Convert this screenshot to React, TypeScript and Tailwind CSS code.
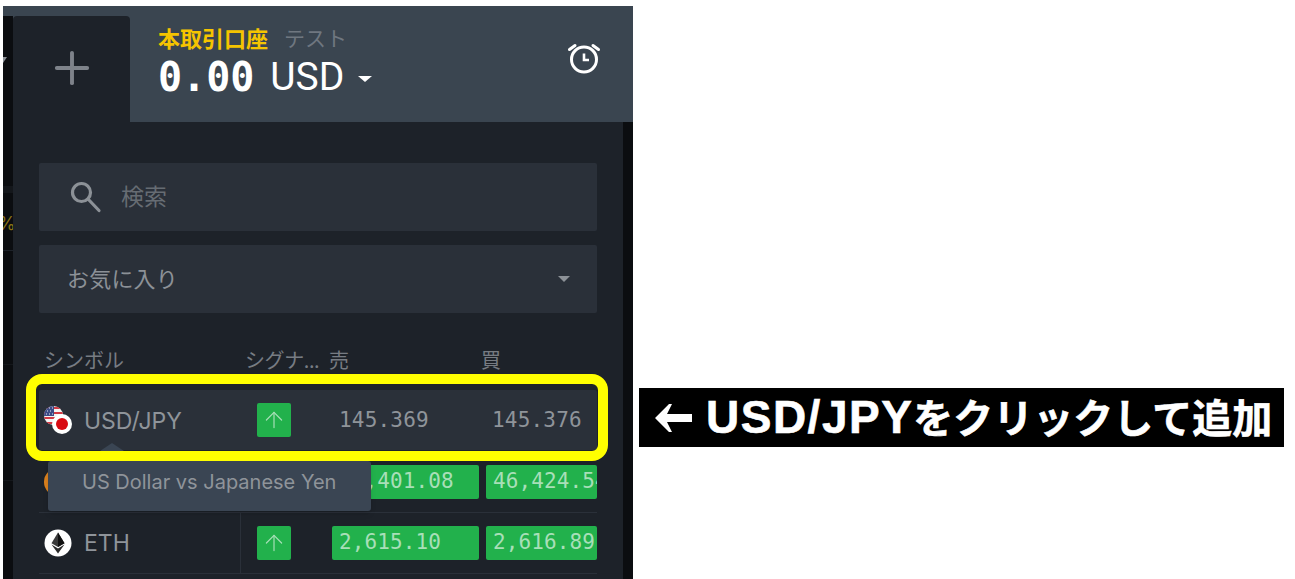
import { Plus, ArrowUp } from "lucide-react";

const jp = "font-['Noto_Sans_CJK_JP','Noto_Sans',sans-serif]";
const ui = "font-['Inter','Noto_Sans_CJK_JP',sans-serif]";
const mono = "font-['DejaVu_Sans_Mono',monospace]";

function AlarmIcon() {
  return (
    <svg width="34" height="36" viewBox="0 0 34 36" fill="none" stroke="white" strokeLinecap="round">
      <circle cx="17" cy="19.5" r="12.5" strokeWidth="3" />
      <path d="M17 13.5v6.5h5" strokeWidth="2.6" strokeLinecap="butt" />
      <path d="M2.5 9.5 8 5.5M31.5 9.5 26 5.5" strokeWidth="3" />
    </svg>
  );
}

function SearchIcon() {
  return (
    <svg width="32" height="32" viewBox="0 0 32 32" fill="none" stroke="#8c9197" strokeWidth="3.2" strokeLinecap="round" className="shrink-0">
      <circle cx="11.5" cy="11.5" r="9" />
      <path d="M18 18 29 29.5" />
    </svg>
  );
}

function BannerArrow() {
  return (
    <svg width="37" height="28" viewBox="0 0 37 28" fill="white" className="shrink-0">
      <path d="M0 14 14 0h3l-5 10h25v8H12l5 10h-3z" />
    </svg>
  );
}

function UsJpFlag() {
  return (
    <div className="relative h-[28px] w-[28px] shrink-0">
      <svg width="19" height="19" viewBox="0 0 19 19" className="absolute left-0 top-0">
        <defs>
          <clipPath id="us-clip">
            <circle cx="9.5" cy="9.5" r="9.5" />
          </clipPath>
        </defs>
        <g clipPath="url(#us-clip)">
          <rect width="19" height="19" fill="#f4f4f4" />
          <path d="M0 2h19M0 7h19M0 12h19M0 17h19" stroke="#d23a45" strokeWidth="2" />
          <rect width="10" height="10" fill="#3d4c86" />
          <path d="M2 2h1M5 2h1M8 2h1M3 5h1M6 5h1M2 8h1M5 8h1M8 8h1" stroke="#e8e8f0" strokeWidth="1" />
        </g>
      </svg>
      <div className="absolute left-[8px] top-[8px] flex h-[20px] w-[20px] items-center justify-center rounded-full bg-white">
        <div className="h-[12px] w-[12px] rounded-full bg-[#d80a12]" />
      </div>
    </div>
  );
}

function EthIcon() {
  return (
    <svg width="28" height="28" viewBox="0 0 28 28" className="shrink-0">
      <circle cx="14" cy="14" r="13.5" fill="white" />
      <path d="M14 3.5 7.5 14.2 14 18l6.5-3.8z" fill="#3a3a3a" />
      <path d="M14 3.5v14.5l6.5-3.8z" fill="#111" />
      <path d="M7.5 15.6 14 24.5l6.5-8.9L14 19.4z" fill="#2a2a2a" />
    </svg>
  );
}

function SignalButton() {
  return (
    <div className="flex h-[34px] w-[34px] shrink-0 items-center justify-center rounded-[2px] bg-[#22b14c]">
      <ArrowUp size={26} strokeWidth={1.1} className="text-[#a8dfb8]" />
    </div>
  );
}

function PriceCell({ value, className }: { value: string; className: string }) {
  return (
    <div
      className={`flex h-[34px] items-center overflow-hidden whitespace-nowrap rounded-[2px] bg-[#22b14c] pl-[7px] text-[21px] tracking-[0.1px] text-[#a8dfb8] ${mono} ${className}`}
    >
      {value}
    </div>
  );
}

export default function App() {
  return (
    <div className="flex h-[579px] w-[1295px] overflow-hidden bg-white pl-[3px] pt-[6px]">
      <div className="flex h-[573px] w-[630px] shrink-0 flex-col">
        {/* top bar */}
        <div className="flex h-[116px] shrink-0 bg-[#3a4550]">
          <div className="mt-[10px] w-[10px] overflow-hidden bg-[#0b0d10] pt-[41px]">
            <div className="h-0 w-0 -translate-x-[4px] border-x-[4px] border-t-[6px] border-x-transparent border-t-[#8c9197]" />
          </div>
          <div className="mt-[10px] flex h-[106px] w-[117px] items-center justify-center rounded-t-[4px] bg-[#1d2229] pb-[2px]">
            <Plus size={52} strokeWidth={1.8} className="text-[#7e838a]" />
          </div>
          <div className="flex flex-1 flex-col pl-[28px] pt-[16px]">
            <div className={`flex items-center leading-[30px] ${jp}`}>
              <span className="text-[22px] font-bold text-[#f5c400]">本取引口座</span>
              <span className="ml-[16px] text-[21px] text-[#6f7780]">テスト</span>
            </div>
            <div className="mt-[3px] flex items-center text-white">
              <span className={`text-[40px] font-bold leading-[44px] ${mono}`}>0.00</span>
              <span className="ml-[16px] font-['Roboto',sans-serif] text-[39px] leading-[44px]">USD</span>
              <span className="ml-[14px] mt-[4px] h-0 w-0 border-x-[7px] border-t-[6px] border-x-transparent border-t-white" />
            </div>
          </div>
          <div className="flex items-center pb-[12px] pr-[32px]">
            <AlarmIcon />
          </div>
        </div>

        {/* watchlist */}
        <div className="flex flex-1 bg-[#0b0d10]">
          <div className="flex w-[10px] shrink-0 flex-col overflow-hidden">
            <div className="mt-[64px] h-[7px] bg-[#14171b]" />
            <div className={`mt-[19px] -ml-[5px] whitespace-nowrap text-[18px] leading-[24px] text-[#8a7214] ${ui}`}>%</div>
            <div className="mt-[14px] h-px bg-[#1d2229]" />
            <div className="mt-[113px] h-px bg-[#14171b]" />
            <div className="mt-[115px] h-px bg-[#14171b]" />
          </div>
          <div className="relative flex-1 overflow-hidden bg-[#1d2229] px-[26px] pt-[41px]">
            <div className="flex h-[68px] w-[558px] items-center rounded-[2px] bg-[#2a3039] pl-[31px]">
              <SearchIcon />
              <span className={`ml-[19px] -translate-y-[2px] text-[23px] text-[#666c73] ${jp}`}>検索</span>
            </div>
            <div className="mt-[14px] flex h-[68px] w-[558px] items-center justify-between rounded-[2px] bg-[#2a3039] pl-[28px] pr-[27px]">
              <span className={`-translate-y-[2px] text-[22px] tracking-[0.2px] text-[#8c9197] ${jp}`}>お気に入り</span>
              <span className="h-0 w-0 border-x-[6px] border-t-[6px] border-x-transparent border-t-[#8c9197]" />
            </div>

            <div className={`mt-[32px] flex h-[45px] w-[558px] items-start text-[20px] leading-[30px] text-[#777c83] ${jp}`}>
              <span className="ml-[5px] w-[201px]">シンボル</span>
              <span className="w-[84px] whitespace-nowrap tracking-[-0.4px]">シグナ...</span>
              <span className="w-[152px]">売</span>
              <span>買</span>
            </div>

            <div className="flex h-[60px] w-[558px] items-center rounded-[2px] bg-[#2a3039] pl-[5px]">
              <UsJpFlag />
              <span className={`ml-[12px] w-[173px] translate-y-[1px] text-[23px] text-[#8f949a] ${ui}`}>USD/JPY</span>
              <SignalButton />
              <span className={`ml-[48px] w-[153px] translate-y-[1px] text-[21px] tracking-[0.2px] text-[#8f949a] ${mono}`}>145.369</span>
              <span className={`translate-y-[1px] text-[21px] tracking-[0.2px] text-[#8f949a] ${mono}`}>145.376</span>
            </div>

            <div className="flex h-[63px] w-[558px] items-center border-b border-[#2a3039] pl-[5px] pt-[1px]">
              <div className="h-[28px] w-[28px] shrink-0 rounded-full bg-[#d9801e]" />
              <div className="ml-[185px]">
                <SignalButton />
              </div>
              <PriceCell value="46,401.08" className="ml-[41px] w-[147px]" />
              <PriceCell value="46,424.54" className="ml-[7px] flex-1" />
            </div>

            <div className="flex h-[61px] w-[558px] items-center border-b border-[#2a3039] pl-[5px]">
              <EthIcon />
              <span className={`ml-[12px] w-[157px] text-[23px] text-[#8f949a] ${ui}`}>ETH</span>
              <div className="-ml-px flex items-center self-stretch border-l border-[#2a3039] pl-[16px]">
                <SignalButton />
              </div>
              <PriceCell value="2,615.10" className="ml-[41px] w-[147px]" />
              <PriceCell value="2,616.89" className="ml-[7px] flex-1" />
            </div>

            {/* tooltip over the BTC row */}
            <div className="absolute left-[35px] top-[339px] flex h-[50px] w-[323px] items-start rounded-[3px] bg-[#3a4553] pl-[34px] pt-[6px] shadow-md">
              <span className={`text-[20px] text-[#8f949a] ${ui}`}>US Dollar vs Japanese Yen</span>
            </div>
            <div className="absolute left-[87px] top-[321px] h-0 w-0 border-x-[12px] border-b-[8px] border-x-transparent border-b-[#3a4553]" />

            {/* highlight drawn over the screenshot */}
            <div className="absolute left-[13px] top-[252px] h-[87px] w-[582px] rounded-[16px] border-[10px] border-[#ffff00]" />
          </div>
          <div className="w-[10px] shrink-0" />
        </div>
      </div>

      <div className="ml-[6px] mt-[382px] flex h-[59px] w-[645px] items-center gap-[14px] whitespace-nowrap bg-black pl-[16px] text-white">
        <BannerArrow />
        <span className="font-['Liberation_Sans','Noto_Sans_CJK_JP',sans-serif] font-bold [-webkit-text-stroke:0.6px_white]">
          <span className="text-[46px] tracking-[1.5px]">USD/JPY</span>
          <span className="text-[40px]">をクリックして追加</span>
        </span>
      </div>
    </div>
  );
}
